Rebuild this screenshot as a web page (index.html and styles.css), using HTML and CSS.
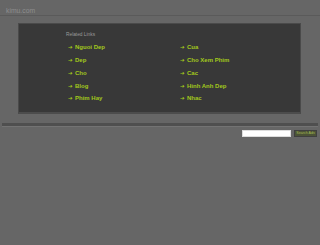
FILE: index.html
```html
<!DOCTYPE html>
<html lang="en">
<head>
    <meta charset="UTF-8">
    <title>kimu.com</title>
    <link rel="stylesheet" href="styles.css">
</head>
<body>
    <div class="header">
        <span class="domain">kimu.com</span>
    </div>

    <div class="content">
        <div class="links-box">
            <div class="links-title">Related Links</div>
            <div class="links-grid">
                <a class="link" href="#"><span class="arrow">&#10132;</span>Nguoi Dep</a>
                <a class="link" href="#"><span class="arrow">&#10132;</span>Cua</a>
                <a class="link" href="#"><span class="arrow">&#10132;</span>Dep</a>
                <a class="link" href="#"><span class="arrow">&#10132;</span>Cho Xem Phim</a>
                <a class="link" href="#"><span class="arrow">&#10132;</span>Cho</a>
                <a class="link" href="#"><span class="arrow">&#10132;</span>Cac</a>
                <a class="link" href="#"><span class="arrow">&#10132;</span>Blog</a>
                <a class="link" href="#"><span class="arrow">&#10132;</span>Hinh Anh Dep</a>
                <a class="link" href="#"><span class="arrow">&#10132;</span>Phim Hay</a>
                <a class="link" href="#"><span class="arrow">&#10132;</span>Nhac</a>
            </div>
        </div>
    </div>

    <div class="divider"></div>

    <div class="search">
        <input class="search-input" type="text">
        <button class="search-btn">Search Ads</button>
    </div>
</body>
</html>
```

FILE: styles.css
```css
body {
    margin: 0;
    background-color: #666;
    font-family: "Liberation Sans", Arial, sans-serif;
}
.header {
    height: 15px;
    padding-left: 6px;
    border-bottom: 1px solid #5a5a5a;
}
.domain {
    display: block;
    padding-top: 7px;
    font-size: 6.8px;
    line-height: 7px;
    color: #8e8e8e;
}
.content {
    padding: 7px 19px 0 18px;
}
.links-box {
    height: 88px;
    background-color: #383838;
    border: 1px solid #4a4a4a;
    border-bottom: 2px solid #4c4c4c;
    padding-left: 47px;
}
.links-title {
    padding-top: 8px;
    font-size: 4.8px;
    line-height: 5px;
    color: #9a9a9a;
}
.links-grid {
    display: grid;
    grid-template-columns: 112px 112px;
    grid-auto-rows: 12.75px;
    padding-top: 4px;
}
.link {
    display: flex;
    align-items: center;
    font-size: 6px;
    font-weight: bold;
    color: #a2c81c;
    text-decoration: none;
    padding-left: 2px;
}
.arrow {
    font-family: "DejaVu Sans", sans-serif;
    font-size: 5.5px;
    width: 7px;
}
.divider {
    margin: 9px 2px 0 2px;
    height: 3px;
    background-color: #4f4f4f;
    border-bottom: 1px solid #737373;
}
.search {
    display: flex;
    justify-content: flex-end;
    align-items: center;
    gap: 3px;
    padding: 3px 3px 0 0;
}
.search-input {
    box-sizing: border-box;
    width: 49px;
    height: 7px;
    margin: 0;
    padding: 0;
    border: 1px solid #ddd;
    background-color: #fff;
}
.search-btn {
    box-sizing: border-box;
    width: 23px;
    height: 7px;
    margin: 0;
    padding: 0;
    border: 1px solid #3f3f3f;
    background-color: #4b5236;
    color: #a4bb55;
    font-family: "Liberation Sans", Arial, sans-serif;
    font-size: 3.6px;
    line-height: 5px;
}
```
